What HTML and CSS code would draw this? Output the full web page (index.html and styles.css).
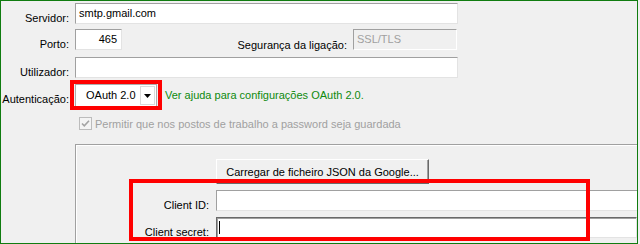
FILE: index.html
```html
<!DOCTYPE html>
<html>
  <head>
    <title>Configuração do servidor de email</title>
    <link rel="stylesheet" href="styles.css">
  </head>
  <body>
    <div class="window">
      <div class="row row-server">
        <label class="lbl">Servidor:</label>
        <div class="field wide">smtp.gmail.com</div>
      </div>

      <div class="row row-port">
        <label class="lbl">Porto:</label>
        <div class="field port">465</div>
        <span class="lbl-sec">Segurança da ligação:</span>
        <div class="field disabled ssl">SSL/TLS</div>
      </div>

      <div class="row row-user">
        <label class="lbl">Utilizador:</label>
        <div class="field wide"></div>
      </div>

      <div class="row row-auth">
        <label class="lbl">Autenticação:</label>
        <div class="combo">
          <span class="combo-text">OAuth 2.0</span>
          <span class="combo-btn">
            <svg width="7" height="4" viewBox="0 0 7 4"><path d="M0 0h7L3.5 4z" fill="#000"/></svg>
          </span>
        </div>
        <a class="help" href="#">Ver ajuda para configurações OAuth 2.0.</a>
      </div>

      <div class="row row-check">
        <span class="check">
          <svg width="13" height="13" viewBox="0 0 13 13">
            <rect x="0.5" y="0.5" width="12" height="12" fill="#f4f4f4" stroke="#bcbcbc"/>
            <path d="M3 6.5l2.3 2.4L10 3.8" fill="none" stroke="#a3a3a3" stroke-width="1.6"/>
          </svg>
        </span>
        <span class="check-text">Permitir que nos postos de trabalho a password seja guardada</span>
      </div>

      <div class="group">
        <div class="btn-row">
          <button class="btn">Carregar de ficheiro JSON da Google...</button>
        </div>
        <div class="row row-id">
          <label class="lbl lbl-oauth">Client ID:</label>
          <div class="field oauth-id"></div>
        </div>
        <div class="row row-secret">
          <label class="lbl lbl-oauth">Client secret:</label>
          <div class="field oauth-secret"><span class="caret"></span></div>
        </div>
      </div>

      <!-- annotation frames -->
      <span class="mark mark-auth"></span>
      <span class="mark mark-client"></span>
    </div>
  </body>
</html>
```

FILE: styles.css
```css
body {
  margin: 0;
  background-color: #f0f0f0;
  font-family: "Liberation Sans", Arial, sans-serif;
  font-size: 11px;
  color: #000;
}
.window {
  position: relative;
  box-sizing: border-box;
  width: 638px;
  height: 244px;
  border: 1px solid #107c10;
  overflow: hidden;
  background-color: #f0f0f0;
}
.row {
  display: flex;
  align-items: flex-end;
}
.lbl {
  width: 68px;
  margin-right: 6px;
  text-align: right;
  line-height: 13px;
  margin-bottom: -1px;
  white-space: nowrap;
}
.field {
  box-sizing: border-box;
  height: 21px;
  line-height: 19px;
  padding: 0 3px;
  background-color: #fff;
  border: 1px solid;
  border-color: #a0a0a0 #e3e3e3 #e3e3e3 #a0a0a0;
  white-space: nowrap;
}
.wide {
  width: 383px;
}
.row-server {
  margin-top: 2px;
}
.row-port {
  margin-top: 5px;
}
.port {
  width: 47px;
  text-align: right;
  padding-right: 4px;
}
.lbl-sec {
  width: 225px;
  margin-right: 6px;
  text-align: right;
  line-height: 13px;
  margin-bottom: -2px;
}
.disabled {
  background-color: #f0f0f0;
  color: #a0a0a0;
  border-color: #a0a0a0 #fff #fff #a0a0a0;
}
.ssl {
  width: 104px;
}
.row-user {
  margin-top: 7px;
}
.row-auth {
  margin-top: 6px;
}
.row-auth .lbl {
  margin-bottom: 1px;
}
.combo {
  box-sizing: border-box;
  display: flex;
  width: 82px;
  height: 23px;
  border: 1px solid #adadad;
  background-color: #fff;
}
.combo-text {
  flex: 1;
  padding-left: 10px;
  line-height: 21px;
}
.combo-btn {
  box-sizing: border-box;
  width: 15px;
  margin: 1px 1px 1px 0;
  border: 1px solid #dadada;
  display: flex;
  align-items: center;
  justify-content: center;
}
.help {
  align-self: center;
  margin-left: 8px;
  color: #0e8a0e;
  text-decoration: none;
  line-height: 13px;
}
.row-check {
  margin-top: 10px;
  margin-left: 78px;
}
.check {
  display: flex;
  width: 13px;
  height: 13px;
}
.check-text {
  margin-left: 3px;
  color: #a0a0a0;
  line-height: 13px;
  margin-bottom: -1px;
}
.group {
  width: 640px;
  height: 120px;
  margin-top: 14px;
  margin-left: 74px;
  border-top: 1px solid #a0a0a0;
  border-left: 1px solid #a0a0a0;
  box-shadow: inset 1px 1px 0 #fff;
  padding-top: 14px;
}
.btn-row {
  display: flex;
  padding-left: 140px;
}
.btn {
  box-sizing: border-box;
  width: 213px;
  height: 25px;
  padding: 0;
  font-family: "Liberation Sans", Arial, sans-serif;
  font-size: 11px;
  color: #000;
  background-color: #f0f0f0;
  border: 1px solid;
  border-color: #fff #696969 #696969 #fff;
  box-shadow: inset -1px -1px 0 #a0a0a0;
}
.row-id {
  margin-top: 6px;
}
.row-secret {
  margin-top: 6px;
}
.lbl-oauth {
  width: 133px;
  margin-right: 7px;
}
.oauth-id {
  width: 423px;
  border-right: none;
}
.oauth-secret {
  width: 421px;
  border-color: #696969 #e3e3e3 #e3e3e3 #696969;
  box-shadow: inset 1px 1px 0 #a0a0a0;
  display: flex;
  align-items: center;
  padding-left: 2px;
}
.caret {
  width: 1px;
  height: 13px;
  background-color: #000;
}
.mark {
  position: absolute;
  box-sizing: border-box;
  border: 4px solid #ff0000;
}
.mark-auth {
  left: 69px;
  top: 79px;
  width: 92px;
  height: 30px;
}
.mark-client {
  left: 128px;
  top: 178px;
  width: 461px;
  height: 62px;
}
```
